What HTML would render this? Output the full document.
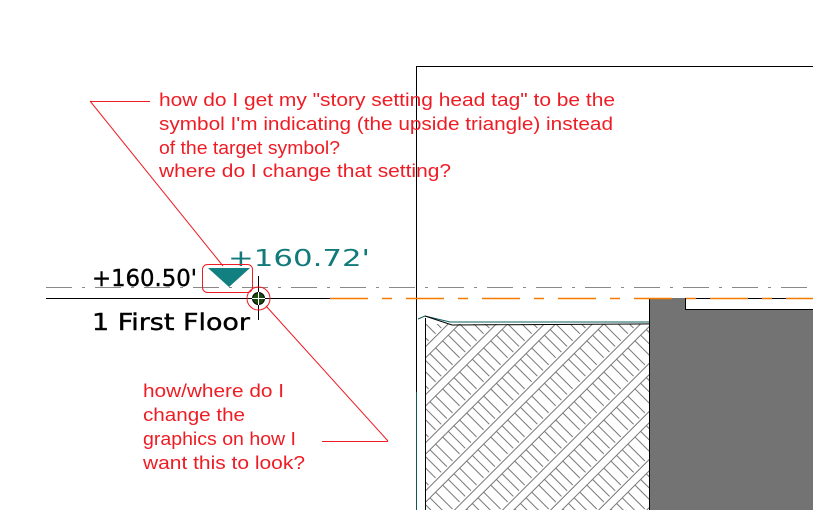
<!DOCTYPE html>
<html><head><meta charset="utf-8"><style>
html,body{margin:0;padding:0;background:#fff;width:813px;height:510px;overflow:hidden}
svg{display:block}
.r{font-family:"Liberation Sans",sans-serif;font-size:18.5px;fill:#ee1c24}
.c{font-family:"DejaVu Sans",sans-serif;fill:#000}
</style></head><body>
<svg width="813" height="510" viewBox="0 0 813 510" xmlns="http://www.w3.org/2000/svg">
<defs>
<pattern id="h" patternUnits="userSpaceOnUse" width="34" height="34" patternTransform="rotate(-45)">
<line x1="0" y1="2" x2="34" y2="2" stroke="#777" stroke-width="1"/>
<line x1="0" y1="10" x2="34" y2="10" stroke="#777" stroke-width="1"/>
<line x1="4" y1="10" x2="4" y2="34" stroke="#777" stroke-width="1"/>
<line x1="12" y1="10" x2="12" y2="34" stroke="#777" stroke-width="1"/>
<line x1="20" y1="10" x2="20" y2="34" stroke="#777" stroke-width="1"/>
<line x1="28" y1="10" x2="28" y2="34" stroke="#777" stroke-width="1"/>
</pattern>
</defs>
<line x1="416.5" y1="66" x2="416.5" y2="392" stroke="#000"/>
<line x1="416.5" y1="392" x2="416.5" y2="510" stroke="#0d5c5c"/>
<line x1="416" y1="66.5" x2="813" y2="66.5" stroke="#000"/>
<rect x="425" y="324" width="224" height="186" fill="url(#h)"/>
<line x1="425.5" y1="318" x2="425.5" y2="510" stroke="#000"/>
<path d="M418 319 L425 316 L450 322 L650 322" fill="none" stroke="#0d5c5c"/>
<path d="M425 316 L452 325 L813 323" fill="none" stroke="#000"/>
<rect x="649" y="298" width="164" height="212" fill="#737373"/>
<rect x="685.5" y="298.5" width="128" height="11" fill="#fff" stroke="#000"/>
<line x1="649.5" y1="298" x2="649.5" y2="510" stroke="#000"/>
<line x1="46" y1="287.5" x2="813" y2="287.5" stroke="#888" stroke-dasharray="26,10,3,10"/>
<line x1="46" y1="298.5" x2="330" y2="298.5" stroke="#000"/>
<line x1="330" y1="298.5" x2="813" y2="298.5" stroke="#f57a00" stroke-width="1.5" stroke-dasharray="38,14,10,14"/>
<text class="c" x="92" y="286" font-size="23" textLength="105" lengthAdjust="spacingAndGlyphs" stroke="#000" stroke-width="0.4">+160.50'</text>
<text class="c" x="92" y="330" font-size="23" textLength="158" lengthAdjust="spacingAndGlyphs" stroke="#000" stroke-width="0.4">1 First Floor</text>
<text x="228" y="266" font-family="'DejaVu Sans',sans-serif" font-size="23" fill="#127a7a" textLength="142" lengthAdjust="spacingAndGlyphs">+160.72'</text>
<polygon points="208,268 250,268 229,287" fill="#128080"/>
<rect x="202.5" y="264.5" width="50" height="28" rx="5" fill="none" stroke="#ee1c24"/>
<line x1="258.5" y1="276" x2="258.5" y2="320" stroke="#000"/>
<line x1="244" y1="298.5" x2="296" y2="298.5" stroke="#000"/>
<circle cx="258.5" cy="298.5" r="6" fill="#1d4a10" stroke="#000"/>
<line x1="252" y1="298.5" x2="265" y2="298.5" stroke="#fff"/>
<line x1="258.5" y1="292" x2="258.5" y2="305" stroke="#fff"/>
<circle cx="258.5" cy="298.5" r="11.5" fill="none" stroke="#ee1c24"/>
<line x1="90" y1="101.5" x2="150" y2="101.5" stroke="#ee1c24"/>
<line x1="90" y1="101" x2="223" y2="266" stroke="#ee1c24"/>
<line x1="266" y1="306" x2="388" y2="441" stroke="#ee1c24"/>
<line x1="322" y1="441.5" x2="388" y2="441.5" stroke="#ee1c24"/>
<text class="r" x="159" y="106" textLength="456" lengthAdjust="spacingAndGlyphs">how do I get my "story setting head tag" to be the</text>
<text class="r" x="159" y="130" textLength="454" lengthAdjust="spacingAndGlyphs">symbol I'm indicating (the upside triangle) instead</text>
<text class="r" x="159" y="154" textLength="181" lengthAdjust="spacingAndGlyphs">of the target symbol?</text>
<text class="r" x="159" y="177" textLength="292" lengthAdjust="spacingAndGlyphs">where do I change that setting?</text>
<text class="r" x="143" y="397" textLength="141" lengthAdjust="spacingAndGlyphs">how/where do I</text>
<text class="r" x="143" y="421" textLength="102" lengthAdjust="spacingAndGlyphs">change the</text>
<text class="r" x="143" y="445" textLength="153" lengthAdjust="spacingAndGlyphs">graphics on how I</text>
<text class="r" x="143" y="469" textLength="162" lengthAdjust="spacingAndGlyphs">want this to look?</text>
</svg>
</body></html>
